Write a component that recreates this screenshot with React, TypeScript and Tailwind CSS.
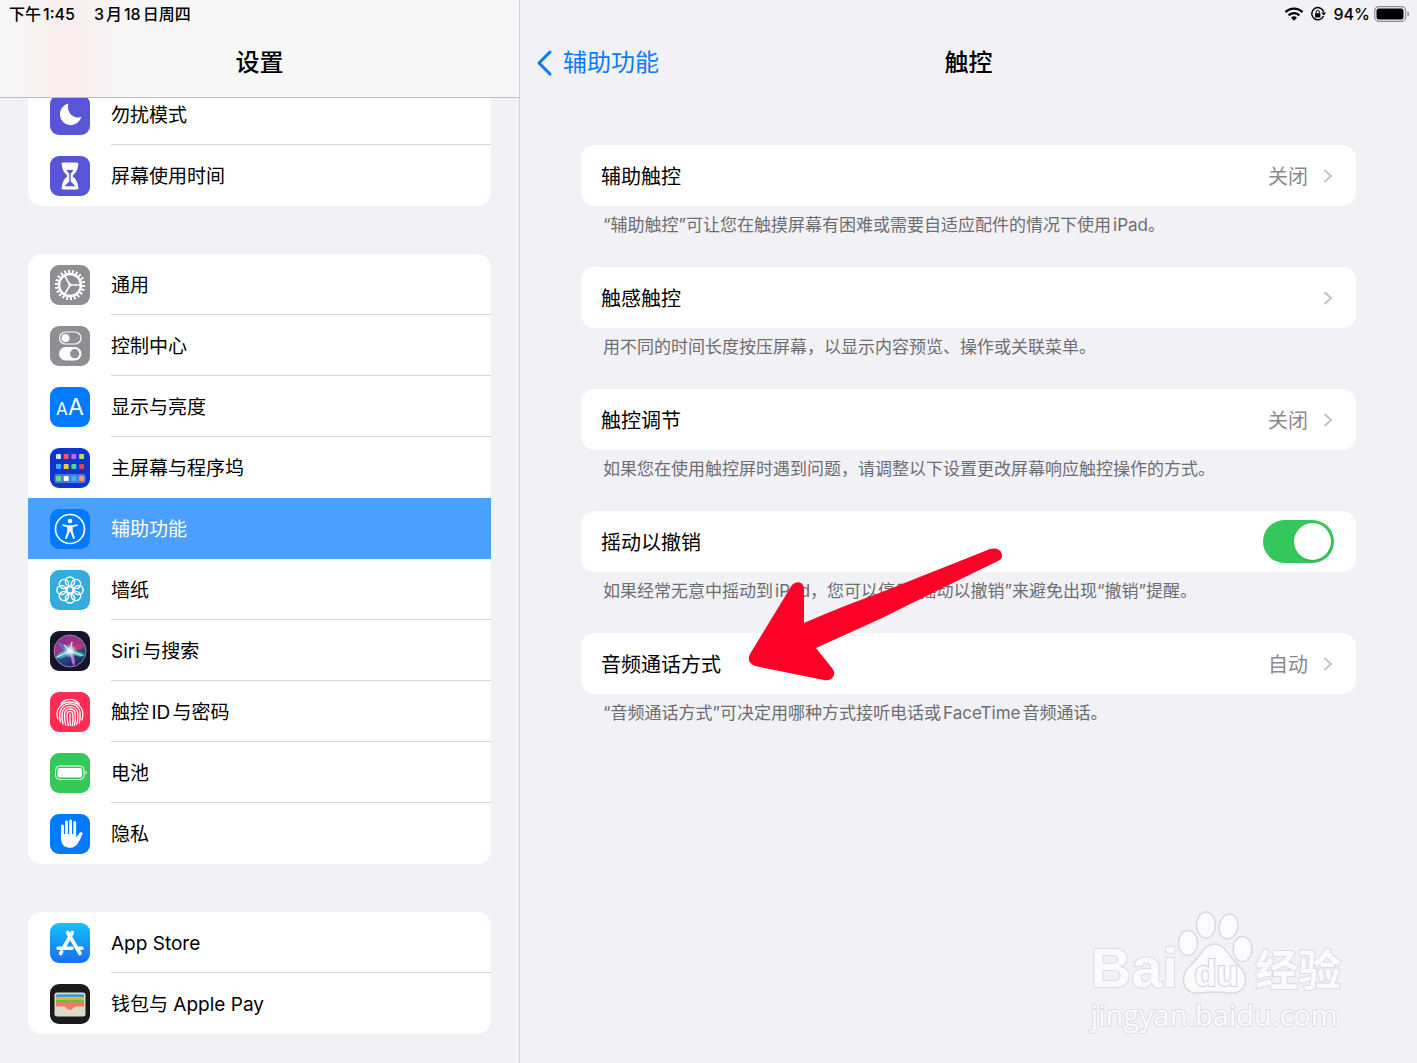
import type { ReactNode } from 'react'

type MenuItem = {
  label: string
  icon: ReactNode
  active?: boolean
}

type TouchOption = {
  label: string
  note: string
  value?: string
  toggle?: boolean
}

function Tile({ className = '', children }: { className?: string; children: ReactNode }) {
  return (
    <span className={`block size-10 shrink-0 overflow-hidden rounded-[9px] ${className}`}>
      <svg viewBox="0 0 40 40" className="size-10" fill="none" aria-hidden="true">
        {children}
      </svg>
    </span>
  )
}

const moonIcon = (
  <Tile className="bg-[#5855d6]">
    <path d="M18.4 8.6a10.9 10.9 0 1 0 13 13.2c-7.6 3.2-15.6-4.6-13-13.2z" fill="#fff" />
  </Tile>
)

const hourglassIcon = (
  <Tile className="bg-[#5855d6]">
    <path
      d="M13.5 6.5h13a1.8 1.8 0 0 1 1.8 2.2c-.6 5-2.2 8-5.5 10.7v1.2c3.3 2.7 4.9 5.7 5.5 10.7a1.8 1.8 0 0 1-1.8 2.2h-13a1.8 1.8 0 0 1-1.8-2.2c.6-5 2.2-8 5.5-10.7v-1.2c-3.3-2.7-4.9-5.7-5.5-10.7a1.8 1.8 0 0 1 1.8-2.2z"
      fill="#fff"
    />
    <path d="M16.5 14h7c-.8 1.5-1.8 2.4-2.8 3.4v8l5 4.8H14.3l5-4.8v-8c-1-1-2-1.9-2.8-3.4z" fill="#5855d6" />
  </Tile>
)

const gearIcon = (
  <Tile className="bg-[#8e8e93]">
    <g stroke="#fff">
      <circle cx="20" cy="20" r="11" strokeWidth="2.4" />
      <circle cx="20" cy="20" r="13.6" strokeWidth="3.2" pathLength="44" strokeDasharray="1 1" />
      <path d="M20 20h10.5M20 20l-5.3-9.2M20 20l-5.3 9.2" strokeWidth="1.6" />
    </g>
    <circle cx="20" cy="20" r="1.7" fill="#fff" />
  </Tile>
)

const controlIcon = (
  <Tile className="bg-[#8e8e93]">
    <rect x="9.5" y="6" width="21.5" height="12" rx="6" stroke="#fff" strokeWidth="1.2" />
    <circle cx="15.5" cy="12" r="4" fill="#fff" />
    <rect x="9" y="21" width="22.5" height="13.5" rx="6.75" fill="#fff" />
    <circle cx="24.7" cy="27.7" r="4.6" fill="#8e8e93" />
  </Tile>
)

const displayIcon = (
  <Tile className="bg-[#007aff]">
    <g fill="#fff" fontFamily="Inter, sans-serif">
      <text x="6" y="28" fontSize="17">A</text>
      <text x="18" y="28" fontSize="23">A</text>
    </g>
  </Tile>
)

const homeDots = [
  ['#e4e4ef', '#ff5560', '#b76cf8', '#b4df55'],
  ['#34b3fb', '#ffc91f', '#3be0a1', '#f0413f'],
  ['#5fe183', '#ffffff', '#2eb9fb', '#ff9d57'],
]
const homeRows = [6, 16, 28]

const homeIcon = (
  <Tile className="bg-[#0d35cf]">
    <rect x="4.5" y="26" width="31" height="9" rx="2" fill="#4f75e6" />
    {homeDots.map((row, r) =>
      row.map((color, c) => (
        <rect key={`${r}-${c}`} x={6 + c * 7.7} y={homeRows[r]} width="5" height="5" rx="1" fill={color} />
      ))
    )}
  </Tile>
)

const accessibilityIcon = (
  <Tile className="bg-[#007aff]">
    <circle cx="20" cy="20" r="14.5" stroke="#fff" strokeWidth="1.7" />
    <circle cx="20" cy="12" r="2.3" fill="#fff" />
    <path
      d="M12.6 15.2l5.4 1.1h4l5.4-1.1.3 1.5-5 1.5v4.2l2.3 7-1.8.6-2.8-7.3h-.8l-2.8 7.3-1.8-.6 2.3-7v-4.200l-5-1.500z"
      fill="#fff"
    />
  </Tile>
)

const wallpaperIcon = (
  <Tile className="bg-[#35aadc]">
    <g stroke="#fff" strokeWidth="1.5">
      {[0, 45, 90, 135, 180, 225, 270, 315].map((angle) => (
        <circle key={angle} cx="20" cy="11.500" r="4.600" transform={`rotate(${angle} 20 20)`} />
      ))}
      <circle cx="20" cy="20" r="3.2" />
    </g>
  </Tile>
)

const siriIcon = (
  <Tile className="bg-[#15142c]">
    <defs>
      <linearGradient id="siri-orb" x1="12" y1="5" x2="26" y2="36" gradientUnits="userSpaceOnUse">
        <stop offset="0" stopColor="#8b2b9c" />
        <stop offset=".35" stopColor="#a8357c" />
        <stop offset=".6" stopColor="#2b4b86" />
        <stop offset="1" stopColor="#1c1f55" />
      </linearGradient>
      <radialGradient id="siri-core">
        <stop offset="0" stopColor="#fff" />
        <stop offset=".4" stopColor="#d8f8ff" stopOpacity=".8" />
        <stop offset="1" stopColor="#7cd6ff" stopOpacity="0" />
      </radialGradient>
    </defs>
    <circle cx="20" cy="20" r="16" fill="url(#siri-orb)" stroke="#8f86b4" strokeWidth="1" />
    <path d="M20 20C25 12 31 11 34.5 15c-3 4-8 5-14.5 5z" fill="#e0306c" opacity=".75" />
    <path d="M20 20C11 19 7 23 5.5 27c5 2 12-1 14.5-7z" fill="#38d3c4" opacity=".7" />
    <path d="M20 20c6-1 12 1 15 4-3 3-10 2-15-4z" fill="#39d79d" opacity=".75" />
    <path d="M20 20c-4-7-9-9-12-8 1 5 6 8 12 8z" fill="#4a7de8" opacity=".7" />
    <path d="M20 20c1 6 1 11 4 15 2-5 0-11-4-15z" fill="#f06cf0" opacity=".9" />
    <path d="M7 26l13-6 12 4.5M20 20l-6-6M20 20l2-9" stroke="#dffaff" strokeWidth="1.3" opacity=".9" />
    <circle cx="20" cy="20" r="7.500" fill="url(#siri-core)" />
  </Tile>
)

const touchIdIcon = (
  <Tile className="bg-[#ff2d55]">
    <g stroke="#fff" strokeWidth="1.3" strokeLinecap="round">
      <path d="M11 11.500C16 6 24 6 29 11.500" />
      <path d="M8 27c-1.500-3.500-1.200-8 .8-11C13.500 8 26.500 8 31.200 16c2 3.500 2 8 .6 12" />
      <path d="M10.500 30c-.8-3-1-6.500-.7-9C11 9.500 28 8.500 30 20c.4 4 .2 7-.8 11" />
      <path d="M13 32c-1-4-1.200-7.500-.8-11 1.200-8.500 14.500-8.500 15.500 0 .4 4 .1 8-1 11.500" />
      <path d="M15.700 33c-1.200-4.500-1.500-8-1.100-11.500 1-6 9.900-6 10.700 0 .3 4 0 8-.9 12" />
      <path d="M18.300 33.500c-1.100-4.500-1.500-8-1.200-11.500.6-3.500 5.200-3.500 5.800 0 .3 4 .1 8-.6 11.500" />
      <path d="M20 22c-.1 4 .1 8 .4 11.500" />
    </g>
  </Tile>
)

const batteryIcon = (
  <Tile className="bg-[#34c759]">
    <rect x="5.5" y="13" width="28.5" height="13.5" rx="4" stroke="#fff" strokeWidth="1" />
    <rect x="7.5" y="15" width="24.5" height="9.5" rx="2" fill="#fff" />
    <path d="M35.500 17.600c1.600.5 1.600 3.800 0 4.300z" fill="#fff" />
  </Tile>
)

const handIcon = (
  <Tile className="bg-[#007aff]">
    <path
      d="M12.5 12v12M16.5 8v14M20.6 7v14M24.7 8.5v14"
      stroke="#fff"
      strokeWidth="2.8"
      strokeLinecap="round"
    />
    <path
      d="M11.100 20h15v3.500c1.300-1 2.300-3 3.300-4.400.8-1.200 3.400-1 3.200.6-.8 2.300-2.400 5.500-3.900 8.300-2 3.800-4.700 5.800-9 5.800-5.500 0-8.600-3.500-8.600-9z"
      fill="#fff"
    />
  </Tile>
)

const appStoreIcon = (
  <Tile className="bg-gradient-to-b from-[#1cc0fa] to-[#1c6df2]">
    <g stroke="#fff" strokeWidth="3.6" strokeLinecap="round">
      <path d="M22.300 9.500L13.500 25M11.600 28.800l-1 1.700" />
      <path d="M17.700 9.500l12.300 21" />
      <path d="M8 25.300h14M29 25.300h3" />
    </g>
  </Tile>
)

const walletIcon = (
  <Tile className="bg-[#1b1b1b]">
    <rect x="4.5" y="8.5" width="31" height="24" rx="2.5" fill="#dedacb" />
    <rect x="6" y="10.3" width="28" height="6" rx="1.5" fill="#3f9bd1" />
    <rect x="6" y="13" width="28" height="5" rx="1" fill="#f0b52c" />
    <rect x="6" y="15.7" width="28" height="5" rx="1" fill="#6abf4b" />
    <path d="M6 19.500a1 1 0 0 1 1-1h26a1 1 0 0 1 1 1v3h-8.500c-1.500 0-2 3.300-5.500 3.300s-4-3.300-5.500-3.300H6z" fill="#f17a63" />
  </Tile>
)

const groups: MenuItem[][] = [
  [
    { label: '勿扰模式', icon: moonIcon },
    { label: '屏幕使用时间', icon: hourglassIcon },
  ],
  [
    { label: '通用', icon: gearIcon },
    { label: '控制中心', icon: controlIcon },
    { label: '显示与亮度', icon: displayIcon },
    { label: '主屏幕与程序坞', icon: homeIcon },
    { label: '辅助功能', icon: accessibilityIcon, active: true },
    { label: '墙纸', icon: wallpaperIcon },
    { label: 'Siri与搜索', icon: siriIcon },
    { label: '触控ID与密码', icon: touchIdIcon },
    { label: '电池', icon: batteryIcon },
    { label: '隐私', icon: handIcon },
  ],
  [
    { label: 'App Store', icon: appStoreIcon },
    { label: '钱包与 Apple Pay', icon: walletIcon },
  ],
]

const options: TouchOption[] = [
  {
    label: '辅助触控',
    value: '关闭',
    note: '“辅助触控”可让您在触摸屏幕有困难或需要自适应配件的情况下使用iPad。',
  },
  {
    label: '触感触控',
    note: '用不同的时间长度按压屏幕，以显示内容预览、操作或关联菜单。',
  },
  {
    label: '触控调节',
    value: '关闭',
    note: '如果您在使用触控屏时遇到问题，请调整以下设置更改屏幕响应触控操作的方式。',
  },
  {
    label: '摇动以撤销',
    toggle: true,
    note: '如果经常无意中摇动到iPad，您可以停用“摇动以撤销”来避免出现“撤销”提醒。',
  },
  {
    label: '音频通话方式',
    value: '自动',
    note: '“音频通话方式”可决定用哪种方式接听电话或FaceTime音频通话。',
  },
]

function MenuRow({ item, divider }: { item: MenuItem; divider: boolean }) {
  return (
    <li>
      <a
        href="#"
        aria-current={item.active ? 'page' : undefined}
        className={`flex h-[61px] items-center gap-[21px] pl-[22px] ${item.active ? 'bg-[#4ba0fe] text-white' : 'text-black'}`}
      >
        {item.icon}
        <span
          className={`flex h-full flex-1 items-center border-b pt-[5px] ${divider ? 'border-[#d6d6d9]' : 'border-transparent'}`}
        >
          {item.label}
        </span>
      </a>
    </li>
  )
}

function OptionRow({ option }: { option: TouchOption }) {
  const row = 'flex h-[61px] w-full items-center rounded-[14px] bg-white pr-[22px] pl-5 text-xl text-black'
  return (
    <section className="h-[122px]">
      {option.toggle ? (
        <label className={row}>
          <span className="flex-1 pt-[3px]">{option.label}</span>
          <input
            type="checkbox"
            role="switch"
            defaultChecked
            className="h-[43px] w-[71px] appearance-none rounded-full bg-gray-200 p-[3px] before:block before:size-[37px] before:rounded-full before:bg-white before:shadow-sm checked:bg-[#34c759] checked:pl-[31px]"
          />
        </label>
      ) : (
        <button type="button" className={row}>
          <span className="flex-1 pt-[3px] text-left">{option.label}</span>
          {option.value && <span className="pt-[3px] text-[#8a8a8e]">{option.value}</span>}
          <svg viewBox="0 0 12 16" className="ml-[14px] h-4 w-3" fill="none" aria-hidden="true">
            <path d="M2.500 2l6.500 6-6.500 6" stroke="#c4c4c7" strokeWidth="2" />
          </svg>
        </button>
      )}
      <p className="px-[22px] pt-[7px] text-[17px] leading-6 text-[#6d6d72]">{option.note}</p>
    </section>
  )
}

function StatusIcons() {
  return (
    <div className="flex h-7 items-center justify-end pr-[7px] text-base font-medium">
      <svg viewBox="0 0 20 14" className="mr-[6px] h-[14px] w-5" aria-hidden="true">
        <g fill="none" stroke="#000" strokeWidth="2.4">
          <path d="M1.500 5.200a12 12 0 0 1 17 0" />
          <path d="M4.600 8.400a7.600 7.600 0 0 1 10.800 0" />
        </g>
        <path d="M10 13.800l-3-3.100a4.300 4.300 0 0 1 6 0z" />
      </svg>
      <svg viewBox="0 0 16 16" className="mr-2 size-4" aria-hidden="true">
        <path d="M13.500 10a6.100 6.100 0 1 1 .2-4" fill="none" stroke="#000" strokeWidth="1.5" />
        <path d="M11.200 6.400h4.800l-2 3.200z" />
        <rect x="5" y="7.200" width="5.400" height="4.200" rx=".6" />
        <path d="M6.100 7.500V6a1.600 1.600 0 0 1 3.200 0v1.500" fill="none" stroke="#000" />
      </svg>
      <span>94%</span>
      <svg viewBox="0 0 36 16" className="ml-1 h-4 w-9" aria-hidden="true">
        <rect x=".7" y=".7" width="31" height="14.6" rx="4.2" fill="none" stroke="#8c8c90" strokeWidth="1.2" />
        <rect x="2.5" y="2.5" width="27" height="11" rx="2.5" />
        <path d="M33.500 5.500c2 .7 2 4.300 0 5z" fill="#8c8c90" />
      </svg>
    </div>
  )
}

function RedArrow() {
  return (
    <svg
      viewBox="0 0 256 136"
      className="pointer-events-none absolute top-[546px] left-[228px] h-[136px] w-64"
      aria-hidden="true"
    >
      <path
        d="M2 108L44 39Q48 35 53 37Q56 39 56 44V77Q90 62 134 46L242 3Q250 1 253 6Q256 12 250 15Q190 44 134 72L68 102L84 122Q88 127 85 131Q82 135 76 134L7 120Q-2 116 2 108Z"
        fill="#fd0127"
      />
    </svg>
  )
}

function Watermark() {
  const outline = 'text-[#fbfbfd] [-webkit-text-stroke:2px_#dcdce1] [paint-order:stroke_fill]'
  return (
    <div className="pointer-events-none absolute right-[76px] bottom-7">
      <div className="flex items-end font-bold">
        <span className={`font-['Liberation_Sans'] text-[56px] leading-[54px] ${outline}`}>Bai</span>
        <div className="relative h-[84px] w-[77px]">
          <svg viewBox="0 0 77 84" className="h-[84px] w-[77px]" aria-hidden="true">
            <g fill="#fbfbfd" stroke="#d9d9de" strokeWidth="1.5">
              <ellipse cx="10" cy="32" rx="9.5" ry="12.5" />
              <ellipse cx="28" cy="14" rx="9.5" ry="13" />
              <ellipse cx="50.5" cy="15.5" rx="9.5" ry="12.5" transform="rotate(12 50.5 15.5)" />
              <ellipse cx="64.5" cy="38" rx="9.5" ry="12.5" />
              <path d="M36.500 33c-9 0-12 8-18 15S4.500 60 5.500 70s9 13 16 12 10-1 15-1 9 0 15 1 15-2 16-12-7-15-13-22-9-15-18-15z" />
            </g>
          </svg>
          <span className="absolute inset-x-0 bottom-[3px] text-center font-['Liberation_Sans'] text-[36px] leading-9 text-[#fbfbfd] [-webkit-text-stroke:2px_#d2d2d8] [paint-order:stroke_fill]">
            du
          </span>
        </div>
        <span className={`text-[43px] leading-[50px] ${outline}`}>经验</span>
      </div>
      <div className={`font-['Open_Sans'] text-[29px] leading-10 font-medium ${outline}`}>jingyan.baidu.com</div>
    </div>
  )
}

export default function App() {
  return (
    <div className="flex min-h-screen overflow-hidden bg-[#f2f1f6] font-['Inter','Noto_Sans_CJK_SC',sans-serif] text-black [text-autospace:normal]">
      <aside className="w-[520px] shrink-0 border-r border-[#d3d3d8]">
        <header className="relative z-10 h-[98px] border-b border-[#bdbdc2] bg-[linear-gradient(90deg,#f7f7f7_10px,#f9eff1_50px,#f9eff1_85px,#f7f7f7_130px)]">
          <div className="flex h-7 items-center gap-[19px] pl-[9px] text-base font-medium">
            <span>下午1:45</span>
            <span>3月18日周四</span>
          </div>
          <h1 className="pt-[17px] text-center text-2xl leading-9 font-medium">设置</h1>
        </header>
        <nav className="-mt-[14px] flex flex-col gap-12 px-7 pb-7 text-[19px]">
          {groups.map((items, i) => (
            <ul key={i} className="overflow-hidden rounded-[14px] bg-white">
              {items.map((item, j) => (
                <MenuRow
                  key={item.label}
                  item={item}
                  divider={j < items.length - 1 && !item.active && !items[j + 1].active}
                />
              ))}
            </ul>
          ))}
        </nav>
      </aside>

      <main className="relative min-w-0 flex-1">
        <StatusIcons />
        <div className="grid grid-cols-3 items-center px-[15px] pt-[17px]">
          <a href="#" className="flex items-center gap-[10px] text-2xl leading-9 text-[#0a7aff]">
            <svg viewBox="0 0 18 28" className="h-7 w-[18px]" fill="none" aria-hidden="true">
              <path d="M15 3L4 14l11 11" stroke="currentColor" strokeWidth="3" strokeLinecap="round" strokeLinejoin="round" />
            </svg>
            辅助功能
          </a>
          <h2 className="text-center text-2xl leading-9 font-medium">触控</h2>
        </div>
        <div className="px-[61px] pt-16">
          {options.map((option) => (
            <OptionRow key={option.label} option={option} />
          ))}
        </div>
        <RedArrow />
        <Watermark />
      </main>
    </div>
  )
}
